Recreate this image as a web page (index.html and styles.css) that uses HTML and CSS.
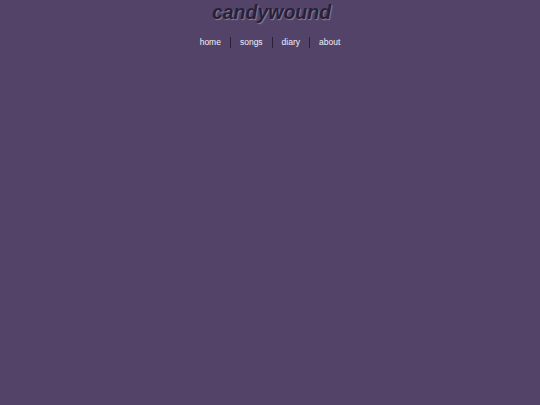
FILE: index.html
```html
<!DOCTYPE html>
<html>
<head>
<meta charset="utf-8">
<link rel="stylesheet" href="styles.css">
</head>
<body>
<header class="site-header">
  <h1 class="title">candywound</h1>
  <nav class="nav">
    <a class="nav-link" href="#">home</a>
    <a class="nav-link" href="#">songs</a>
    <a class="nav-link" href="#">diary</a>
    <a class="nav-link" href="#">about</a>
  </nav>
</header>
</body>
</html>
```
FILE: styles.css
```css
html, body {
  margin: 0;
  padding: 0;
  background: #534368;
  height: 100%;
}
body {
  font-family: "Liberation Sans", Arial, sans-serif;
}
.site-header {
  display: flex;
  flex-direction: column;
  align-items: center;
}
.title {
  margin: 1px 0 0 3px;
  font-size: 19.5px;
  line-height: 22px;
  font-weight: bold;
  font-style: italic;
  color: #2a2038;
  text-shadow: 1px 1px 1px #8a8296;
}
.nav {
  display: flex;
  margin-top: 14px;
}
.nav-link {
  color: #f2eef6;
  text-decoration: none;
  font-size: 8.5px;
  line-height: 11px;
  padding: 0 9px;
}
.nav-link + .nav-link {
  border-left: 1px solid #2a2038;
}
```
